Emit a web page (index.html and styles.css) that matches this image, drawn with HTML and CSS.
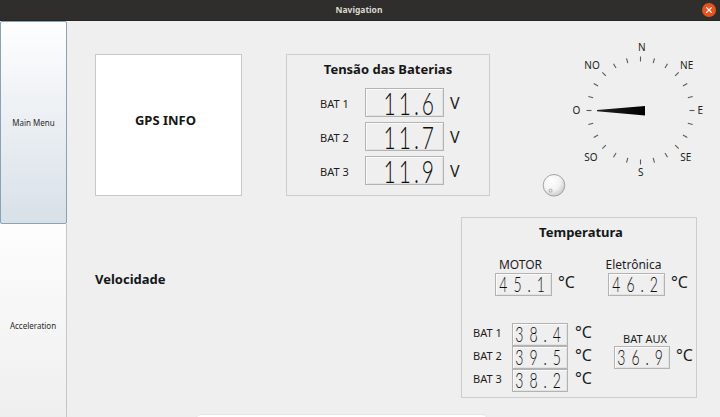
FILE: index.html
```html
<!DOCTYPE html>
<html lang="pt">
<head>
<meta charset="utf-8">
<title>Navigation</title>
<link rel="stylesheet" href="styles.css">
</head>
<body>
<div class="window">
  <header class="titlebar">
    <span class="title">Navigation</span>
    <svg class="close" width="14" height="14" viewBox="0 0 14 14">
      <circle cx="7" cy="7" r="7" fill="#e6531d"/>
      <path d="M4.6 4.6 L9.4 9.4 M9.4 4.6 L4.6 9.4" stroke="#fff" stroke-width="1.3" stroke-linecap="round"/>
    </svg>
  </header>
  <div class="main">
    <nav class="sidebar">
      <button class="navbtn active">Main Menu</button>
      <button class="navbtn plain">Acceleration</button>
    </nav>
    <section class="content">
      <div class="toprow">
        <div class="gps">GPS INFO</div>
        <div class="panel battery">
          <h2 class="ptitle">Tensão das Baterias</h2>
          <div class="vrows">
            <span class="lbl">BAT 1</span><span class="lcd big"><span class="dg">11.6</span></span><span class="unit">V</span>
            <span class="lbl">BAT 2</span><span class="lcd big"><span class="dg">11.7</span></span><span class="unit">V</span>
            <span class="lbl">BAT 3</span><span class="lcd big"><span class="dg">11.9</span></span><span class="unit">V</span>
          </div>
        </div>
        <svg class="compass" width="176" height="165" viewBox="0 0 176 165">
          <defs>
            <radialGradient id="knobg" cx="38%" cy="32%" r="75%">
              <stop offset="0" stop-color="#ffffff"/>
              <stop offset="0.55" stop-color="#f2f2f2"/>
              <stop offset="1" stop-color="#c4c4c4"/>
            </radialGradient>
            <linearGradient id="needleg" x1="0" y1="0" x2="1" y2="0">
              <stop offset="0" stop-color="#222"/>
              <stop offset="1" stop-color="#000"/>
            </linearGradient>
          </defs>
          <g stroke="#5a5a5a" stroke-width="1.1">
            <line x1="100.5" y1="21.5" x2="100.5" y2="26.5" transform="rotate(0 100.5 75.5)"/>
            <line x1="100.5" y1="21.5" x2="100.5" y2="26.5" transform="rotate(15 100.5 75.5)"/>
            <line x1="100.5" y1="21.5" x2="100.5" y2="26.5" transform="rotate(30 100.5 75.5)"/>
            <line x1="100.5" y1="21.5" x2="100.5" y2="26.5" transform="rotate(45 100.5 75.5)"/>
            <line x1="100.5" y1="21.5" x2="100.5" y2="26.5" transform="rotate(60 100.5 75.5)"/>
            <line x1="100.5" y1="21.5" x2="100.5" y2="26.5" transform="rotate(75 100.5 75.5)"/>
            <line x1="100.5" y1="21.5" x2="100.5" y2="26.5" transform="rotate(90 100.5 75.5)"/>
            <line x1="100.5" y1="21.5" x2="100.5" y2="26.5" transform="rotate(105 100.5 75.5)"/>
            <line x1="100.5" y1="21.5" x2="100.5" y2="26.5" transform="rotate(120 100.5 75.5)"/>
            <line x1="100.5" y1="21.5" x2="100.5" y2="26.5" transform="rotate(135 100.5 75.5)"/>
            <line x1="100.5" y1="21.5" x2="100.5" y2="26.5" transform="rotate(150 100.5 75.5)"/>
            <line x1="100.5" y1="21.5" x2="100.5" y2="26.5" transform="rotate(165 100.5 75.5)"/>
            <line x1="100.5" y1="21.5" x2="100.5" y2="26.5" transform="rotate(180 100.5 75.5)"/>
            <line x1="100.5" y1="21.5" x2="100.5" y2="26.5" transform="rotate(195 100.5 75.5)"/>
            <line x1="100.5" y1="21.5" x2="100.5" y2="26.5" transform="rotate(210 100.5 75.5)"/>
            <line x1="100.5" y1="21.5" x2="100.5" y2="26.5" transform="rotate(225 100.5 75.5)"/>
            <line x1="100.5" y1="21.5" x2="100.5" y2="26.5" transform="rotate(240 100.5 75.5)"/>
            <line x1="100.5" y1="21.5" x2="100.5" y2="26.5" transform="rotate(255 100.5 75.5)"/>
            <line x1="100.5" y1="21.5" x2="100.5" y2="26.5" transform="rotate(270 100.5 75.5)"/>
            <line x1="100.5" y1="21.5" x2="100.5" y2="26.5" transform="rotate(285 100.5 75.5)"/>
            <line x1="100.5" y1="21.5" x2="100.5" y2="26.5" transform="rotate(300 100.5 75.5)"/>
            <line x1="100.5" y1="21.5" x2="100.5" y2="26.5" transform="rotate(315 100.5 75.5)"/>
            <line x1="100.5" y1="21.5" x2="100.5" y2="26.5" transform="rotate(330 100.5 75.5)"/>
            <line x1="100.5" y1="21.5" x2="100.5" y2="26.5" transform="rotate(345 100.5 75.5)"/>
          </g>
          <g class="clabels" text-anchor="middle">
            <text x="101.8" y="16.4">N</text>
            <text x="52" y="33.6">NO</text>
            <text x="146.7" y="33.6">NE</text>
            <text x="36.3" y="79.1">O</text>
            <text x="160.2" y="79.1">E</text>
            <text x="50.8" y="126.3">SO</text>
            <text x="145.8" y="126.3">SE</text>
            <text x="100.8" y="140.9">S</text>
          </g>
          <polygon points="57,75 105,71 105,80.5 57,76.2" fill="url(#needleg)"/>
          <circle cx="14" cy="150.3" r="10.8" fill="url(#knobg)" stroke="#a3a3a3" stroke-width="1"/>
          <circle cx="10.6" cy="155.6" r="1.5" fill="#ececec" stroke="#9a9a9a" stroke-width="0.8"/>
        </svg>
      </div>
      <div class="bottomrow">
        <div class="speed">
          <h3 class="speedtitle">Velocidade</h3>
        </div>
        <div class="panel temp">
          <h2 class="ptitle tt">Temperatura</h2>
          <div class="ttop">
            <div class="tgroup g1">
              <span class="tlbl">MOTOR</span>
              <div class="tval"><span class="lcd small"><span class="dg">45.1</span></span><span class="cunit">°C</span></div>
            </div>
            <div class="tgroup g2">
              <span class="tlbl">Eletrônica</span>
              <div class="tval"><span class="lcd small"><span class="dg">46.2</span></span><span class="cunit">°C</span></div>
            </div>
          </div>
          <div class="tbottom">
            <div class="brows">
              <span class="blbl">BAT 1</span><span class="lcd small b"><span class="dg">38.4</span></span><span class="cunit">°C</span>
              <span class="blbl">BAT 2</span><span class="lcd small b"><span class="dg">39.5</span></span><span class="cunit">°C</span>
              <span class="blbl">BAT 3</span><span class="lcd small b"><span class="dg">38.2</span></span><span class="cunit">°C</span>
            </div>
            <div class="aux">
              <span class="auxlbl">BAT AUX</span>
              <div class="tval"><span class="lcd small b"><span class="dg">36.9</span></span><span class="cunit">°C</span></div>
            </div>
          </div>
        </div>
      </div>
      <div class="dock"></div>
    </section>
  </div>
</div>
</body>
</html>
```
FILE: styles.css
```css
* { box-sizing: border-box; margin: 0; padding: 0; }
html, body { width: 720px; height: 417px; overflow: hidden; }
body {
  background: #efefef;
  font-family: "Noto Sans", "DejaVu Sans", sans-serif;
  color: #1d1d1d;
}
.window { display: flex; flex-direction: column; height: 417px; }

/* title bar */
.titlebar {
  height: 21px;
  flex: none;
  background: #2f2e2c;
  border-bottom: 1px solid #262523;
  display: grid;
  grid-template-columns: 1fr auto 1fr;
  align-items: center;
}
.title {
  grid-column: 2;
  font-size: 8.5px;
  font-weight: 700;
  color: #dcd8d0;
  line-height: 20px;
  margin-left: -2px;
}
.close { grid-column: 3; justify-self: end; margin-right: 4px; margin-top: -1px; }

/* main */
.main { flex: 1; display: flex; min-height: 0; }
.sidebar {
  width: 67px;
  flex: none;
  display: flex;
  flex-direction: column;
  overflow: hidden;
}
.navbtn {
  flex: none;
  height: 203px;
  font-family: "Noto Sans", "DejaVu Sans", sans-serif;
  font-size: 8px;
  color: #2a2a2a;
  cursor: pointer;
}
.navbtn.active {
  border: 1px solid #8ba2b5;
  border-radius: 2px;
  background: linear-gradient(#fefefe, #d8e0e8);
}
.navbtn.plain {
  border: none;
  border-right: 1px solid #c6c6c6;
  background: linear-gradient(#fdfdfd, #eeeeee);
}

.content {
  flex: 1;
  min-width: 0;
  padding: 14px 0 0 28px;
  overflow: hidden;
}

/* top row */
.toprow { display: flex; align-items: flex-start; height: 165px; }
.gps {
  flex: none;
  margin-top: 19px;
  width: 147px;
  height: 142px;
  background: #fff;
  border: 1px solid #c8c8c8;
  display: flex;
  align-items: center;
  justify-content: center;
  padding: 0 6px 11px 0;
  font-size: 13px;
  font-weight: 700;
  color: #161616;
}
.panel { border: 1px solid #cdcdcd; flex: none; }
.battery { margin-top: 19px; margin-left: 44px; width: 204px; height: 142px; }
.ptitle {
  font-size: 13px;
  font-weight: 700;
  line-height: 16px;
  text-align: center;
  padding-top: 6px;
  color: #161616;
}
.vrows {
  display: grid;
  grid-template-columns: 45px 79px auto;
  grid-auto-rows: 29px;
  row-gap: 5px;
  margin: 11px 0 0 33px;
  align-items: center;
}
.lbl { font-size: 11px; line-height: 14px; padding-top: 2px; }
.unit { font-size: 16px; line-height: 18px; margin-left: 6px; padding-top: 1px; }

/* LCD displays */
.lcd {
  display: flex;
  align-items: center;
  justify-content: flex-end;
  border: 1px solid #b3b3b3;
  box-shadow: inset 1px 1px 0 #fbfbfb, inset -1px -1px 0 #e2e2e2;
  background: #efefef;
}
.dg {
  display: inline-block;
  font-family: "Lato", "DejaVu Sans", sans-serif;
  font-weight: 300;
  font-variant-numeric: tabular-nums;
  color: #0e0e0e;
  transform: scaleY(1.5);
  transform-origin: 50% 55%;
}
.lcd.big { height: 29px; padding-right: 6px; }
.lcd.big .dg { font-size: 21px; letter-spacing: 3px; line-height: 16px; }
.lcd.small { width: 57px; height: 23px; padding-right: 0px; }
.lcd.small.b { width: 56px; }
.lcd.small .dg { font-size: 14px; letter-spacing: 6px; line-height: 11px; }

.compass { flex: none; margin-left: 50px; }
.clabels text {
  font-family: "Noto Sans", "DejaVu Sans", sans-serif;
  font-size: 10px;
  fill: #222;
}

/* bottom row */
.bottomrow { display: flex; align-items: flex-start; margin-top: 17px; height: 181px; }
.speed { width: 366px; flex: none; }
.speedtitle {
  margin-top: 54px;
  font-size: 13px;
  font-weight: 700;
  line-height: 16px;
  color: #161616;
}
.temp { width: 236px; height: 181px; }
.tt { padding-left: 4px; }
.ttop { display: flex; margin: 18px 0 0 33px; }
.tgroup { display: flex; flex-direction: column; }
.g1 { width: 113px; }
.tlbl {
  width: 57px;
  text-align: center;
  font-size: 12px;
  line-height: 14px;
  margin: 0 0 1px -3px;
  white-space: nowrap;
}
.tval { display: flex; align-items: flex-start; }
.cunit { font-size: 16px; line-height: 19px; margin-left: 6px; white-space: nowrap; }
.tbottom { display: flex; align-items: flex-start; margin: 27px 0 0 11px; }
.brows {
  display: grid;
  grid-template-columns: 39px 56px auto;
  grid-auto-rows: 23px;
  align-items: start;
}
.brows .cunit { margin-left: 7px; }
.blbl { font-size: 11px; line-height: 19px; }
.aux { display: flex; flex-direction: column; margin: 9px 0 0 22px; }
.auxlbl {
  width: 56px;
  text-align: center;
  font-size: 11px;
  line-height: 14px;
  margin-left: 3px;
  white-space: nowrap;
}

.dock {
  margin: 16px 0 0 100px;
  width: 293px;
  height: 20px;
  background: #ffffff;
  border: 1px solid #e4e4e4;
  border-radius: 6px 6px 0 0;
}
```
